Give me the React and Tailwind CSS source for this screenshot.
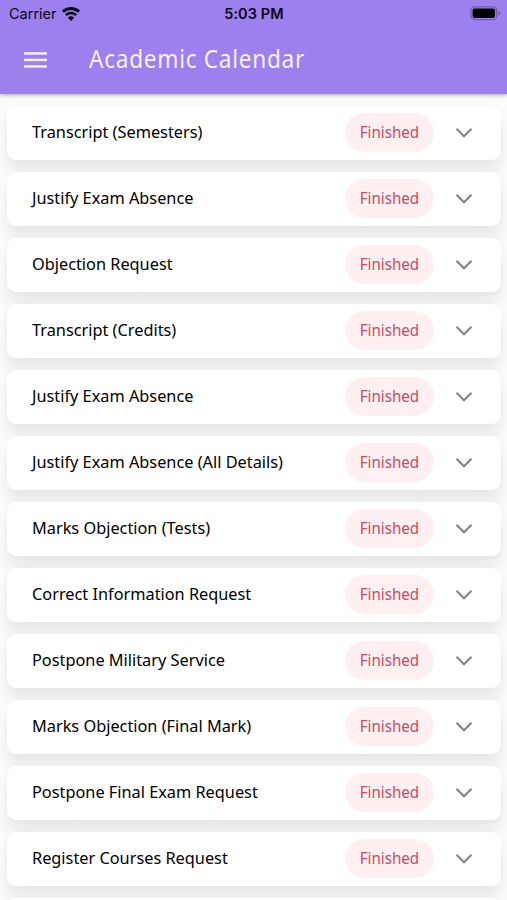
import React, { useState } from "react";

const requests = [
  { id: 1, title: "Transcript (Semesters)", status: "Finished" },
  { id: 2, title: "Justify Exam Absence", status: "Finished" },
  { id: 3, title: "Objection Request", status: "Finished" },
  { id: 4, title: "Transcript (Credits)", status: "Finished" },
  { id: 5, title: "Justify Exam Absence", status: "Finished" },
  { id: 6, title: "Justify Exam Absence (All Details)", status: "Finished" },
  { id: 7, title: "Marks Objection (Tests)", status: "Finished" },
  { id: 8, title: "Correct Information Request", status: "Finished" },
  { id: 9, title: "Postpone Military Service", status: "Finished" },
  { id: 10, title: "Marks Objection (Final Mark)", status: "Finished" },
  { id: 11, title: "Postpone Final Exam Request", status: "Finished" },
  { id: 12, title: "Register Courses Request", status: "Finished" },
];

const WifiIcon = () => (
  <svg width="20" height="15" viewBox="0 0 20 15" fill="none">
    <path d="M1.9 4.8a11.6 11.6 0 0 1 16.2 0" stroke="#0b0716" strokeWidth="2.9" />
    <path d="M4.9 8a7.3 7.3 0 0 1 10.2 0" stroke="#0b0716" strokeWidth="2.5" />
    <path d="M10 13.9 6.9 10.7a4.6 4.6 0 0 1 6.2 0Z" fill="#0b0716" />
  </svg>
);

const BatteryIcon = () => (
  <svg width="31" height="15" viewBox="0 0 31 15" fill="none">
    <rect x="0.9" y="0.9" width="25.8" height="12.8" rx="4" stroke="#6f5caf" strokeWidth="1.3" />
    <rect x="2.6" y="2.6" width="22.4" height="9.4" rx="2" fill="#000" />
    <path d="M28.4 5v4.6c1.1-.4 1.7-1.2 1.7-2.3S29.5 5.4 28.4 5Z" fill="#6f5caf" />
  </svg>
);

const MenuIcon = () => (
  <svg width="23" height="16" viewBox="0 0 23 16" fill="#f5eefb">
    <rect y="0.2" width="23" height="2.5" />
    <rect y="6.7" width="23" height="2.5" />
    <rect y="13.2" width="23" height="2.5" />
  </svg>
);

const StatusBar = () => (
  <div className="grid grid-cols-3 items-center h-[27px] pl-[7px] pr-[6px] text-[#0b0716] font-['Inter',sans-serif]">
    <div className="flex items-center gap-[4px] pl-[2px]">
      <span className="text-[14.5px] leading-7">Carrier</span>
      <WifiIcon />
    </div>
    <span className="text-center text-[14.5px] tracking-[0.1px] font-semibold leading-7">
      5:03 PM
    </span>
    <div className="flex justify-end pb-px">
      <BatteryIcon />
    </div>
  </div>
);

const Header = () => (
  <header className="relative z-10 h-[94px] bg-[#9c80ee] shadow-[0_1px_4px_rgba(0,0,0,0.35)]">
    <StatusBar />
    <div className="flex items-center h-[65px] pl-6">
      <button type="button">
        <MenuIcon />
      </button>
      <h1 className="ml-[42px] text-[24.5px] tracking-[0.75px] origin-left scale-x-[0.925] text-[#f5eefb] whitespace-nowrap">
        Academic Calendar
      </h1>
    </div>
  </header>
);

const RequestCard = ({ title, status, open, onToggle }) => (
  <li className="rounded-[9px] bg-white shadow-[0_13px_16px_rgba(0,0,0,0.08),0_0_6px_rgba(0,0,0,0.03)]">
    <button
      type="button"
      onClick={onToggle}
      className="w-full h-[54px] flex items-center pl-[25px] pr-7"
    >
      <span className="flex-1 pb-px text-left text-[17px] origin-left scale-x-[0.959] text-black whitespace-nowrap">
        {title}
      </span>
      <span className="w-[89px] h-[39px] pb-0.5 rounded-full bg-[#ffeff1] flex items-center justify-center text-[#cb4b62]">
        <span className="text-[16px] scale-x-[0.945]">{status}</span>
      </span>
      <svg
        className={open ? "ml-[21px] rotate-180" : "ml-[21px]"}
        width="18"
        height="12"
        viewBox="0 0 18 12"
        fill="none"
      >
        <path d="m1.5 1.8 7.5 7.5 7.5-7.5" stroke="#858585" strokeWidth="2.2" />
      </svg>
    </button>
    {open && <p className="px-[25px] pb-4 text-sm">{status}</p>}
  </li>
);

const App = () => {
  const [openId, setOpenId] = useState(null);

  const onToggle = (id) => {
    setOpenId((prev) => (prev === id ? null : id));
  };

  return (
    <div className="h-screen overflow-hidden bg-[#fcfcfc] font-['Noto_Sans',sans-serif]">
      <Header />
      <ul className="flex flex-col gap-3 pt-[11.5px] pl-[7px] pr-[6px]">
        {requests.map((r) => (
          <RequestCard
            key={r.id}
            title={r.title}
            status={r.status}
            open={openId === r.id}
            onToggle={() => onToggle(r.id)}
          />
        ))}
        {/* next page placeholder */}
        <li className="h-[54px] shrink-0 rounded-[9px] bg-white"></li>
      </ul>
    </div>
  );
};

export default App;
